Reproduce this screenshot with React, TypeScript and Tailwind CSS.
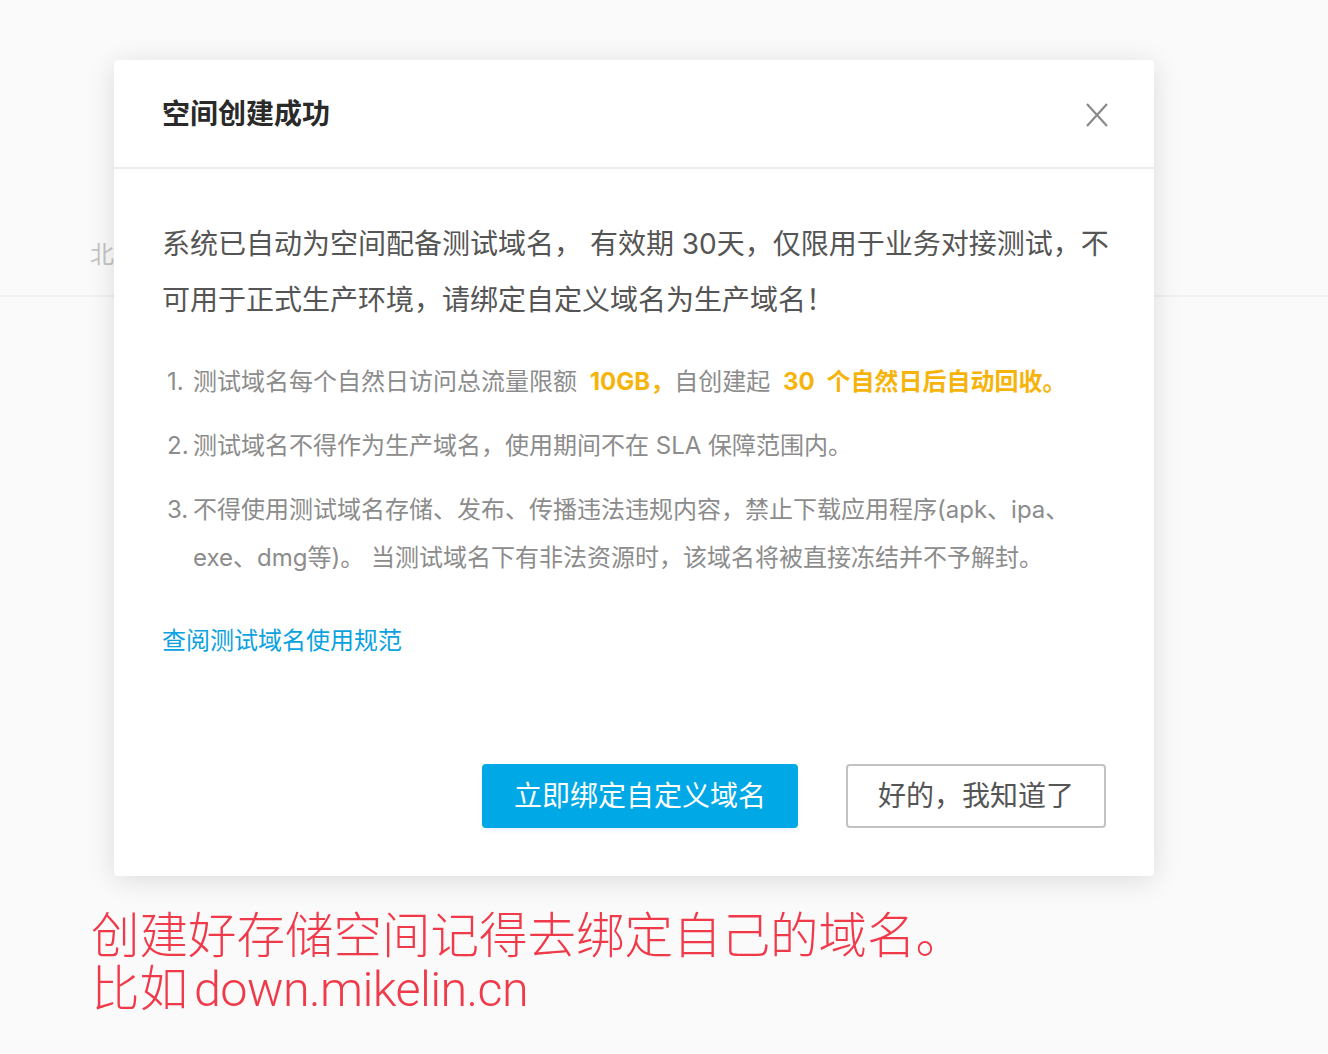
import React from "react";

const font = { fontFamily: "Inter, 'Noto Sans CJK SC', sans-serif" };
const noteFont = { fontFamily: "Roboto, 'Noto Sans CJK SC', sans-serif" };

export default function App() {
  return (
    <div className="relative w-[1328px] h-[1054px] overflow-hidden bg-[#fafafa]" style={font}>
      {/* background page */}
      <div className="h-[297px] border-b-2 border-[#f0f0f0] pl-[90px] pt-[231px]">
        <span className="text-[24px] leading-[48px] text-[#c4c4c4]">北京</span>
      </div>

      {/* modal */}
      <div className="absolute left-[114px] top-[60px] w-[1040px] bg-white rounded-[4px] shadow-[0_4px_28px_rgba(0,0,0,0.12)]">
        <div className="h-[109px] pl-[48px] pr-[46px] flex items-center justify-between border-b-2 border-[#ebebeb]">
          <span className="text-[28px] font-semibold text-[#2a2a2a]">空间创建成功</span>
          <svg width="22" height="24" viewBox="0 0 22 24" className="mt-[2px]">
            <path d="M1 1 L21 23 M21 1 L1 23" stroke="#8a8a8a" strokeWidth="2.2" fill="none" />
          </svg>
        </div>
        <div className="pt-[47px] px-[48px] pb-[48px]">
          <p className="text-[28px] leading-[56px] text-[#555555] -mr-[30px]">
            <span className="block whitespace-nowrap">系统已自动为空间配备测试域名， 有效期 30天，仅限用于业务对接测试，不</span>
            <span className="block whitespace-nowrap">可用于正式生产环境，请绑定自定义域名为生产域名！</span>
          </p>
          <ol className="mt-[30px] flex flex-col gap-[16px] text-[24px] leading-[48px] text-[#8c8c8c] -mr-[30px]">
            <li className="flex pl-[5px]">
              <span className="w-[26px] shrink-0">1.</span>
              <span className="whitespace-nowrap">
                测试域名每个自然日访问总流量限额 <b className="ml-[6px] text-[#f6b40b] font-bold">10GB，</b>自创建起 <b className="ml-[6px] text-[#f6b40b] font-bold">30</b><b className="ml-[12px] text-[#f6b40b] font-bold">个自然日后自动回收。</b>
              </span>
            </li>
            <li className="flex pl-[5px]">
              <span className="w-[26px] shrink-0">2.</span>
              <span className="whitespace-nowrap">测试域名不得作为生产域名，使用期间不在 SLA 保障范围内。</span>
            </li>
            <li className="flex pl-[5px]">
              <span className="w-[26px] shrink-0">3.</span>
              <span>
                <span className="block whitespace-nowrap">不得使用测试域名存储、发布、传播违法违规内容，禁止下载应用程序(apk、ipa、</span>
                <span className="block whitespace-nowrap">exe、dmg等)。 当测试域名下有非法资源时，该域名将被直接冻结并不予解封。</span>
              </span>
            </li>
          </ol>
          <div className="mt-[35px] text-[24px] leading-[48px] text-[#0aa2e0]">查阅测试域名使用规范</div>
          <div className="mt-[99px] flex justify-end gap-[48px]">
            <button className="w-[316px] h-[64px] rounded-[4px] bg-[#00a9e6] text-white text-[28px] shadow-[0_3px_4px_rgba(0,120,170,0.08)]">
              立即绑定自定义域名
            </button>
            <button className="w-[260px] h-[64px] rounded-[4px] border-2 border-[#c2c2c2] bg-white text-[#555555] text-[28px]">
              好的，我知道了
            </button>
          </div>
        </div>
      </div>

      {/* annotation */}
      <div className="absolute left-[91px] top-[910px] text-[48.5px] leading-[53px] font-light text-[#f03a4a]" style={noteFont}>
        <div className="whitespace-nowrap">创建好存储空间记得去绑定自己的域名。</div>
        <div className="whitespace-nowrap">比如<span className="ml-[6px] tracking-[-0.6px]">down.mikelin.cn</span></div>
      </div>
    </div>
  );
}
